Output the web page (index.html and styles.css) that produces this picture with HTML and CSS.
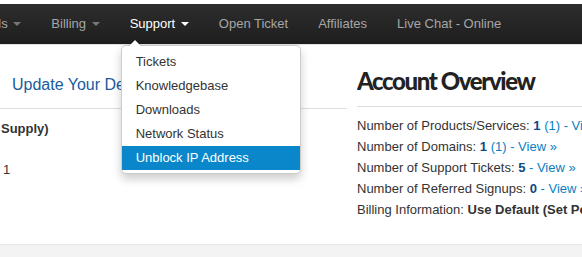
FILE: index.html
```html
<!DOCTYPE html>
<html lang="en">
<head>
  <meta charset="UTF-8" />
  <title>Client Area</title>
  <link rel="stylesheet" href="styles.css">
</head>
<body>
  <div class="navbar">
    <ul class="nav">
      <li><a href="#">Details <b class="caret"></b></a></li>
      <li><a href="#">Billing <b class="caret"></b></a></li>
      <li class="open">
        <a href="#">Support <b class="caret"></b></a>
        <ul class="dropdown-menu">
          <li><a href="#">Tickets</a></li>
          <li><a href="#">Knowledgebase</a></li>
          <li><a href="#">Downloads</a></li>
          <li><a href="#">Network Status</a></li>
          <li class="active"><a href="#">Unblock IP Address</a></li>
        </ul>
      </li>
      <li><a href="#">Open Ticket</a></li>
      <li><a href="#">Affiliates</a></li>
      <li><a href="#">Live Chat - Online</a></li>
    </ul>
  </div>

  <div class="main">
    <div class="col-left">
      <div class="head-left">
        <h2><a href="#">Update Your Details</a></h2>
      </div>
      <div class="row-bold">Supply)</div>
      <div class="row-num">1</div>
    </div>

    <div class="col-right">
      <div class="head-right">
        <h1>Account Overview</h1>
      </div>
      <ul class="overview">
        <li>Number of Products/Services: <a href="#"><strong>1</strong> (1) - View &raquo;</a></li>
        <li>Number of Domains: <a href="#"><strong>1</strong> (1) - View &raquo;</a></li>
        <li>Number of Support Tickets: <a href="#"><strong>5</strong> - View &raquo;</a></li>
        <li>Number of Referred Signups: <a href="#"><strong>0</strong> - View &raquo;</a></li>
        <li>Billing Information: <strong>Use Default (Set Per Order)</strong></li>
      </ul>
    </div>
  </div>

  <div class="footer"></div>
</body>
</html>
```

FILE: styles.css
```css
body {
  margin: 0;
  padding-top: 4px;
  font-family: "Liberation Sans", Arial, sans-serif;
  font-size: 13px;
  color: #333;
  background: #fff;
  overflow: hidden;
}
a {
  text-decoration: none;
}

/* top navigation */
.navbar {
  height: 40px;
  background: linear-gradient(#2d2d2d, #1e1e1e);
  border-bottom: 1px solid #e2e2e2;
  position: relative;
  z-index: 10;
}
.nav {
  list-style: none;
  margin: 0 0 0 -47px;
  padding: 0;
  display: flex;
  white-space: nowrap;
}
.nav > li {
  position: relative;
}
.nav > li > a {
  display: block;
  padding: 10px 15px;
  line-height: 20px;
  color: #a6a6a6;
}
.nav > li.open > a {
  color: #fff;
}
.caret {
  display: inline-block;
  width: 0;
  height: 0;
  vertical-align: top;
  margin-top: 8px;
  margin-left: 2px;
  border-top: 4px solid #777;
  border-left: 4px solid transparent;
  border-right: 4px solid transparent;
}
.open .caret {
  border-top-color: #fff;
}

/* support dropdown */
.dropdown-menu {
  position: absolute;
  top: 41px;
  left: 6px;
  width: 178px;
  margin: 0;
  padding: 4px 0 3px;
  list-style: none;
  background: #fff;
  border: 1px solid rgba(0, 0, 0, 0.2);
  border-radius: 5px;
  box-shadow: 0 5px 10px rgba(0, 0, 0, 0.2);
}
.dropdown-menu::before {
  content: "";
  position: absolute;
  top: -7px;
  left: 6px;
  border-left: 7px solid transparent;
  border-right: 7px solid transparent;
  border-bottom: 7px solid rgba(0, 0, 0, 0.2);
}
.dropdown-menu::after {
  content: "";
  position: absolute;
  top: -6px;
  left: 7px;
  border-left: 6px solid transparent;
  border-right: 6px solid transparent;
  border-bottom: 6px solid #fff;
}
.dropdown-menu a {
  display: block;
  padding: 3px 14px;
  line-height: 18px;
  color: #333;
}
.dropdown-menu .active a {
  background: #0a87ca;
  color: #fff;
}

/* page body */
.main {
  height: 199px;
  display: grid;
  grid-template-columns: 347px 1fr;
  column-gap: 10px;
  white-space: nowrap;
}
.col-left,
.col-right {
  overflow: hidden;
}
.head-left {
  padding: 30px 12px 13px;
  border-bottom: 1px solid #ddd;
}
.head-left h2 {
  margin: 0;
  font-size: 16px;
  font-weight: normal;
  line-height: 20px;
}
.head-left a {
  color: #1a5a9e;
}
.row-bold {
  margin-top: 10px;
  padding-left: 1px;
  line-height: 20px;
  font-weight: bold;
}
.row-num {
  margin-top: 21px;
  padding-left: 3px;
  line-height: 20px;
}
.head-right {
  padding: 21px 0 10px;
  border-bottom: 1px solid #ddd;
}
.head-right h1 {
  margin: 0;
  font-family: Lato, "Liberation Sans", sans-serif;
  font-weight: 900;
  font-size: 24px;
  line-height: 30px;
  letter-spacing: -1.4px;
  color: #222;
}
.overview {
  list-style: none;
  margin: 8px 0 0;
  padding: 0;
}
.overview li {
  line-height: 21px;
}
.overview a {
  color: #0a80c2;
}
.overview a strong {
  color: #0d4a86;
}

.footer {
  height: 20px;
  background: #f3f3f3;
  border-top: 1px solid #e6e6e6;
}
```
